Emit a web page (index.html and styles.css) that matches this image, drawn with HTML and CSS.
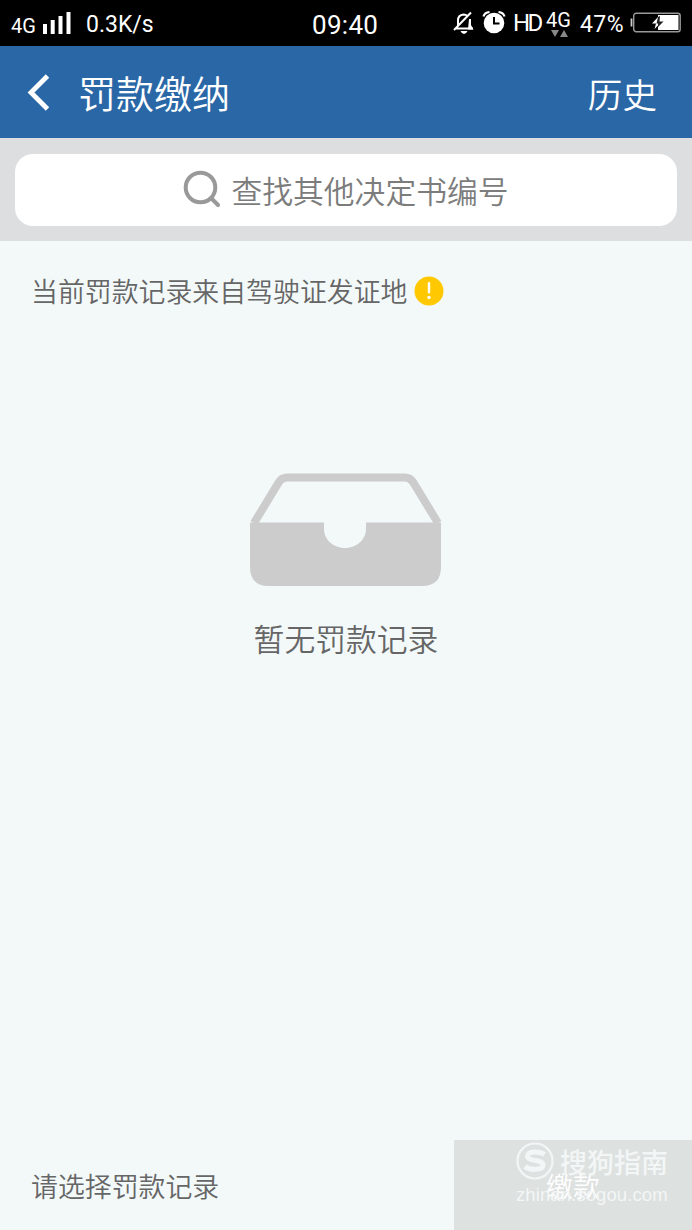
FILE: index.html
```html
<!DOCTYPE html>
<html lang="zh-CN">
<head>
<meta charset="utf-8">
<title>罚款缴纳</title>
<link rel="stylesheet" href="styles.css">
</head>
<body>
<div class="screen">
  <div class="status">
    <div class="status-left">
      <span class="net">4G</span>
      <svg class="signal" width="28" height="22" viewBox="0 0 28 22" fill="#fff"><path d="M0 12h4v10H0zM7.700 8h4v14h-4zM15.500 4h4v18h-4zM23.500 0h4v22h-4z"/></svg>
      <span class="speed">0.3K/s</span>
    </div>
    <span class="clock">09:40</span>
    <div class="status-right">
      <svg class="bell" width="22" height="24" viewBox="0 0 22 24" fill="none" stroke="#fff" stroke-width="2"><path d="M2 17.500h18M5 15V9.500Q5 4 10.500 3.500q2.500 0 4 1.500M17 8v9.500M1 19L18 1.500"/><path d="M16 8h2v6l2.500 4.500H15zM7.500 20h7q-1.200 3-3.500 3t-3.500-3z" fill="#fff" stroke="none"/></svg>
      <svg class="alarm" width="24" height="24" viewBox="0 0 24 24"><circle cx="12" cy="13" r="10.300" fill="#fff"/><path d="M1.500 6.500q1-4 6-4.500M22.500 6.500q-1-4-6-4.500" fill="none" stroke="#fff" stroke-width="2.200"/><path d="M12 7v6.500h5.500" fill="none" stroke="#000" stroke-width="2"/></svg>
      <span class="hd">HD</span>
      <div class="data"><span>4G</span><svg width="17" height="7" viewBox="0 0 17 7" fill="#888"><path d="M0 0h8L4 7zM9 7h8L13 0z"/></svg></div>
      <span class="percent">47%</span>
      <svg class="battery" width="52" height="21" viewBox="0 0 52 21"><path d="M1.500 6.500v8" fill="none" stroke="#ccc" stroke-width="1.800"/><rect x="3.700" y="1.200" width="46.500" height="18.600" rx="2.500" fill="#000" stroke="#999" stroke-width="1.400"/><path d="M28 3h20.500v15H28z" fill="#fff"/><path d="M28 5l-6 6.500h4L24.500 17l3.500-3.500z" fill="#fff"/><path d="M28 5l2-1-.5 5.500h4L28 15v-3.500h-1.500z" fill="#222"/></svg>
    </div>
  </div>
  <header class="header">
    <svg class="back" width="24" height="40" viewBox="0 0 24 40"><path d="M21.500 3L5 19.500 21.500 36" fill="none" stroke="#fff" stroke-width="4.800"/></svg>
    <h1 class="title">罚款缴纳</h1>
    <span class="history">历史</span>
  </header>
  <div class="search-bar">
    <div class="search">
      <svg class="search-icon" width="38" height="38" viewBox="0 0 38 38" fill="none" stroke="#999" stroke-width="4"><circle cx="17.500" cy="17.500" r="14.800"/><path d="M28 28l7 7" stroke-linecap="round"/></svg>
      <span>查找其他决定书编号</span>
    </div>
  </div>
  <main class="content">
    <div class="notice">
      <span>当前罚款记录来自驾驶证发证地</span>
      <svg width="30" height="30" viewBox="0 0 30 30"><circle cx="15" cy="15" r="14.500" fill="#ffc800"/><path d="M15 7.300v9" stroke="#fff" stroke-width="2.400" stroke-linecap="round"/><circle cx="15" cy="21.500" r="1.700" fill="#fff"/></svg>
    </div>
    <div class="empty">
      <svg width="192" height="114" viewBox="0 0 192 114"><path d="M4 50L29 9q3-4.500 8-4.500h118q5 0 8 4.500l25 41" fill="none" stroke="#ccc" stroke-width="8"/><path d="M0 49.500H74V56c0 10 9 19 21 19s21-9 21-19v-6.500h75V94q0 19-19 19H19Q0 113 0 94z" fill="#ccc"/></svg>
      <p class="empty-text">暂无罚款记录</p>
    </div>
  </main>
  <footer class="footer">
    <span class="hint">请选择罚款记录</span>
    <div class="pay">
      <span>缴款</span>
      <div class="watermark">
        <div class="brand">
          <svg width="38" height="38" viewBox="0 0 38 38" fill="none" stroke="#f3f6f6"><circle cx="19" cy="19" r="17.500" stroke-width="2.200"/><path d="M28.500 12.500C24 9 11.500 8.500 11.500 14.200c0 5.300 15.500 3 15.500 8.800 0 5.500-13 5.500-18 1.500" stroke-width="5"/></svg>
          <span>搜狗指南</span>
        </div>
        <span class="site">zhinan.sogou.com</span>
      </div>
    </div>
  </footer>
</div>
</body>
</html>
```
FILE: styles.css
```css
* { box-sizing: border-box; }
body { margin: 0; font-family: "Noto Sans CJK SC DemiLight", "Noto Sans CJK SC", sans-serif; font-weight: 350; }
svg { display: block; flex: none; }
.screen { width: 692px; height: 1230px; display: flex; flex-direction: column; background: #f3f9f9; }

.status { height: 46px; flex: none; display: grid; grid-template-columns: 312px 66px 1fr; background: #000; color: #fff; font-family: Roboto, sans-serif; font-weight: 400; font-size: 24px; line-height: 28px; white-space: nowrap; }
.status-left, .status-right { display: flex; align-items: flex-start; }
.net { width: 32px; margin: 12px 0 0 11px; font-size: 20px; }
.signal { margin-top: 12px; }
.speed { margin: 11px 0 0 15px; font-size: 23px; }
.clock { margin-top: 11px; font-size: 26px; letter-spacing: .3px; }
.status-right { padding-left: 75px; }
.bell { margin-top: 11px; }
.alarm { margin: 10px 0 0 7px; }
.hd { width: 33px; margin: 9px 0 0 7px; letter-spacing: -2.6px; }
.data { width: 34px; padding-top: 10px; font-size: 20px; line-height: 20px; display: flex; flex-direction: column; }
.data svg { margin-left: 5px; }
.percent { width: 50px; margin-top: 11px; font-size: 23px; letter-spacing: .4px; }
.battery { margin-top: 12px; }

.header { height: 92px; flex: none; display: flex; align-items: center; padding: 0 35px 0 26px; background: #2a67a7; color: #fff; }
.back { margin-top: 1px; }
.title { margin: 0 0 0 28px; font-size: 38px; line-height: 50px; font-weight: 350; }
.history { margin-left: auto; font-size: 34.6px; line-height: 50px; padding-top: 1px; }

.search-bar { height: 103px; flex: none; padding: 16px 15px; background: #dddee0; }
.search { height: 72px; display: flex; align-items: center; justify-content: center; gap: 10px; border-radius: 18px; background: #fff; color: #7c7c7c; font-size: 30.8px; line-height: 44px; }
.search-icon { margin-bottom: 2px; }

.content { flex: 1; display: flex; flex-direction: column; color: #666; }
.notice { display: flex; align-items: center; gap: 7px; padding: 30px 0 0 31px; font-size: 26.9px; line-height: 40px; }
.notice svg { margin-top: -1px; }
.empty { display: flex; flex-direction: column; align-items: center; margin-top: 162px; }
.empty-text { margin: 29px 0 0; font-size: 30.8px; line-height: 44px; }

.footer { height: 90px; flex: none; display: flex; justify-content: space-between; font-size: 26.9px; line-height: 40px; color: #666; }
.hint { padding: 26px 0 0 31px; }
.pay { position: relative; width: 238px; padding-top: 26px; text-align: center; background: #dde1e0; color: #fff; }
.watermark { position: absolute; left: 62px; top: 2px; color: #f3f6f6; text-align: left; }
.brand { display: flex; align-items: center; gap: 6px; font-family: "Noto Sans CJK SC", sans-serif; font-size: 27px; line-height: 40px; font-weight: 500; white-space: nowrap; }
.brand svg { margin-top: -2px; }
.site { display: block; font-family: "Liberation Sans", sans-serif; font-weight: 400; font-size: 18.5px; line-height: 22px; letter-spacing: .1px; margin-top: 2px; }
```
